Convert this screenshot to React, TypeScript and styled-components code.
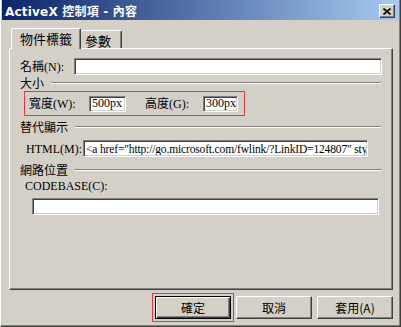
import React from 'react';
import styled, { createGlobalStyle } from 'styled-components';

const GlobalStyle = createGlobalStyle`
  html, body {
    margin: 0;
    padding: 0;
    background: #d4d0c8;
  }
  body {
    font-family: "Liberation Serif", "Noto Sans CJK TC", serif;
    font-size: 12px;
    color: #000;
  }
`;

const Window = styled.div`
  width: 401px;
  height: 327px;
  box-sizing: border-box;
  background: #d4d0c8;
  border-left: 1px solid #ffffff;
  border-right: 1px solid #404040;
  border-bottom: 1px solid #404040;
  box-shadow: inset -1px -1px 0 #808080, inset 1px 0 0 #d4d0c8;
  display: flex;
  flex-direction: column;
  overflow: hidden;
`;

const TitleBar = styled.div`
  height: 20px;
  margin: 0 1px 0 1px;
  background: linear-gradient(to right, #0a246a, #a6caf0);
  display: flex;
  align-items: center;
  justify-content: space-between;
  padding: 0 4px 0 3px;
`;

const Title = styled.span`
  color: #fff;
  font-weight: bold;
  font-size: 12px;
  font-family: "DejaVu Sans", "Noto Sans CJK TC", sans-serif;
  letter-spacing: 0.2px;
`;

const CloseButton = styled.div`
  width: 16px;
  height: 14px;
  box-sizing: border-box;
  background: #d4d0c8;
  border-top: 1px solid #ffffff;
  border-left: 1px solid #ffffff;
  border-right: 1px solid #404040;
  border-bottom: 1px solid #404040;
  box-shadow: inset -1px -1px 0 #808080;
  display: flex;
  align-items: center;
  justify-content: center;
  margin-top: 2px;
`;

const TabStrip = styled.div`
  display: flex;
  align-items: flex-end;
  height: 20px;
  margin: 8px 0 0 8px;
  position: relative;
  z-index: 1;
`;

const Tab = styled.div<{ active?: boolean }>`
  box-sizing: border-box;
  height: ${({ active }) => (active ? 21 : 18)}px;
  margin-left: ${({ active }) => (active ? 2 : 0)}px;
  margin-bottom: ${({ active }) => (active ? -1 : 0)}px;
  padding: ${({ active }) => (active ? '1px 8px 0 8px' : '1px 10px 0 4px')};
  background: #d4d0c8;
  border-top: 1px solid #ffffff;
  border-left: ${({ active }) => (active ? '1px solid #ffffff' : 'none')};
  border-right: 1px solid #404040;
  box-shadow: inset -1px 0 0 #808080;
  border-radius: 2px 2px 0 0;
  font-family: "Noto Sans CJK TC", sans-serif;
  font-size: 13px;
  line-height: 17px;
  white-space: nowrap;
`;

const Panel = styled.div`
  box-sizing: border-box;
  margin-left: 8px;
  width: 384px;
  height: 242px;
  border-top: 1px solid #ffffff;
  border-left: 1px solid #ffffff;
  border-right: 1px solid #404040;
  border-bottom: 1px solid #404040;
  box-shadow: inset -1px -1px 0 #808080;
  display: flex;
  flex-direction: column;
`;

const Row = styled.div<{ indent: number; top: number }>`
  display: flex;
  align-items: center;
  margin-left: ${({ indent }) => indent}px;
  margin-top: ${({ top }) => top}px;
`;

const Label = styled.span<{ width?: number; lead?: number }>`
  width: ${({ width }) => (width ? `${width}px` : 'auto')};
  padding-left: ${({ lead }) => lead ?? 0}px;
  flex-shrink: 0;
  white-space: nowrap;
  line-height: 16px;
`;

const Field = styled.input<{ width: number; height?: number; compact?: boolean }>`
  box-sizing: border-box;
  width: ${({ width }) => width}px;
  height: ${({ height }) => height ?? 17}px;
  padding: 0 1px 0 2px;
  margin: 0;
  background: #ffffff;
  border-top: 1px solid #808080;
  border-left: 1px solid #808080;
  border-right: 1px solid #ffffff;
  border-bottom: 1px solid #ffffff;
  box-shadow: inset 1px 1px 0 #404040, inset -1px -1px 0 #d4d0c8;
  font-family: "Liberation Serif", "Noto Sans CJK TC", serif;
  font-size: ${({ compact }) => (compact ? 11.5 : 12)}px;
  letter-spacing: ${({ compact }) => (compact ? -0.15 : 0)}px;
  color: #000;
  outline: none;
`;

const GroupHeading = styled.div<{ top: number }>`
  display: flex;
  align-items: center;
  margin: ${({ top }) => top}px 11px 0 10px;
  line-height: 16px;
  font-family: "Noto Sans CJK TC", sans-serif;
  font-size: 12px;
`;

const Etch = styled.div`
  flex: 1;
  height: 0;
  margin-left: 7px;
  border-top: 1px solid #808080;
  border-bottom: 1px solid #ffffff;
`;

const Highlight = styled.div`
  box-sizing: border-box;
  display: flex;
  align-items: center;
  width: 221px;
  height: 25px;
  margin: 0 0 0 14px;
  padding-left: 4px;
  border: 1px solid #e03a3a;
`;

const ButtonRow = styled.div`
  display: flex;
  justify-content: flex-end;
  gap: 5px;
  margin: 6px 7px 0 0;
`;

const Button = styled.button<{ primary?: boolean }>`
  box-sizing: border-box;
  width: 76px;
  height: 23px;
  padding: 0;
  background: #d4d0c8;
  font-family: "Noto Sans CJK TC", sans-serif;
  font-size: 12px;
  color: #000;
  border-top: 1px solid ${({ primary }) => (primary ? '#000' : '#ffffff')};
  border-left: 1px solid ${({ primary }) => (primary ? '#000' : '#ffffff')};
  border-right: 1px solid ${({ primary }) => (primary ? '#000' : '#404040')};
  border-bottom: 1px solid ${({ primary }) => (primary ? '#000' : '#404040')};
  box-shadow: ${({ primary }) =>
    primary
      ? 'inset 1px 1px 0 #ffffff, inset -1px -1px 0 #404040, inset -2px -2px 0 #808080'
      : 'inset -1px -1px 0 #808080'};
  outline: ${({ primary }) => (primary ? '1px solid #e03a3a' : 'none')};
  outline-offset: 2px;
`;

export default function App() {
  return (
    <>
      <GlobalStyle />
      <Window>
        <TitleBar>
          <Title>ActiveX 控制項 - 內容</Title>
          <CloseButton>
            <svg width="8" height="7" viewBox="0 0 8 7">
              <path d="M0.5 0.5 L7.5 6.5 M7.5 0.5 L0.5 6.5" stroke="#000" strokeWidth="1.6" />
            </svg>
          </CloseButton>
        </TitleBar>

        <TabStrip>
          <Tab active>物件標籤</Tab>
          <Tab>參數</Tab>
        </TabStrip>

        <Panel>
          <Row indent={10} top={9}>
            <Label width={54}>名稱(N):</Label>
            <Field width={308} defaultValue="" />
          </Row>

          <GroupHeading top={0}>
            大小
            <Etch />
          </GroupHeading>

          <Highlight>
            <Label width={60}>寬度(W):</Label>
            <Field width={37} height={16} defaultValue="500px" />
            <Label width={58} lead={19}>高度(G):</Label>
            <Field width={35} height={16} defaultValue="300px" />
          </Highlight>

          <GroupHeading top={3}>
            替代顯示
            <Etch />
          </GroupHeading>

          <Row indent={16} top={5}>
            <Label width={57}>HTML(M):</Label>
            <Field
              width={285}
              compact
              defaultValue={'<a href="http://go.microsoft.com/fwlink/?LinkID=124807" style'}
            />
          </Row>

          <GroupHeading top={5}>
            網路位置
            <Etch />
          </GroupHeading>

          <Row indent={15} top={0}>
            <Label>CODEBASE(C):</Label>
          </Row>

          <Row indent={22} top={4}>
            <Field width={347} defaultValue="" />
          </Row>
        </Panel>

        <ButtonRow>
          <Button primary>確定</Button>
          <Button>取消</Button>
          <Button>套用(A)</Button>
        </ButtonRow>
      </Window>
    </>
  );
}
